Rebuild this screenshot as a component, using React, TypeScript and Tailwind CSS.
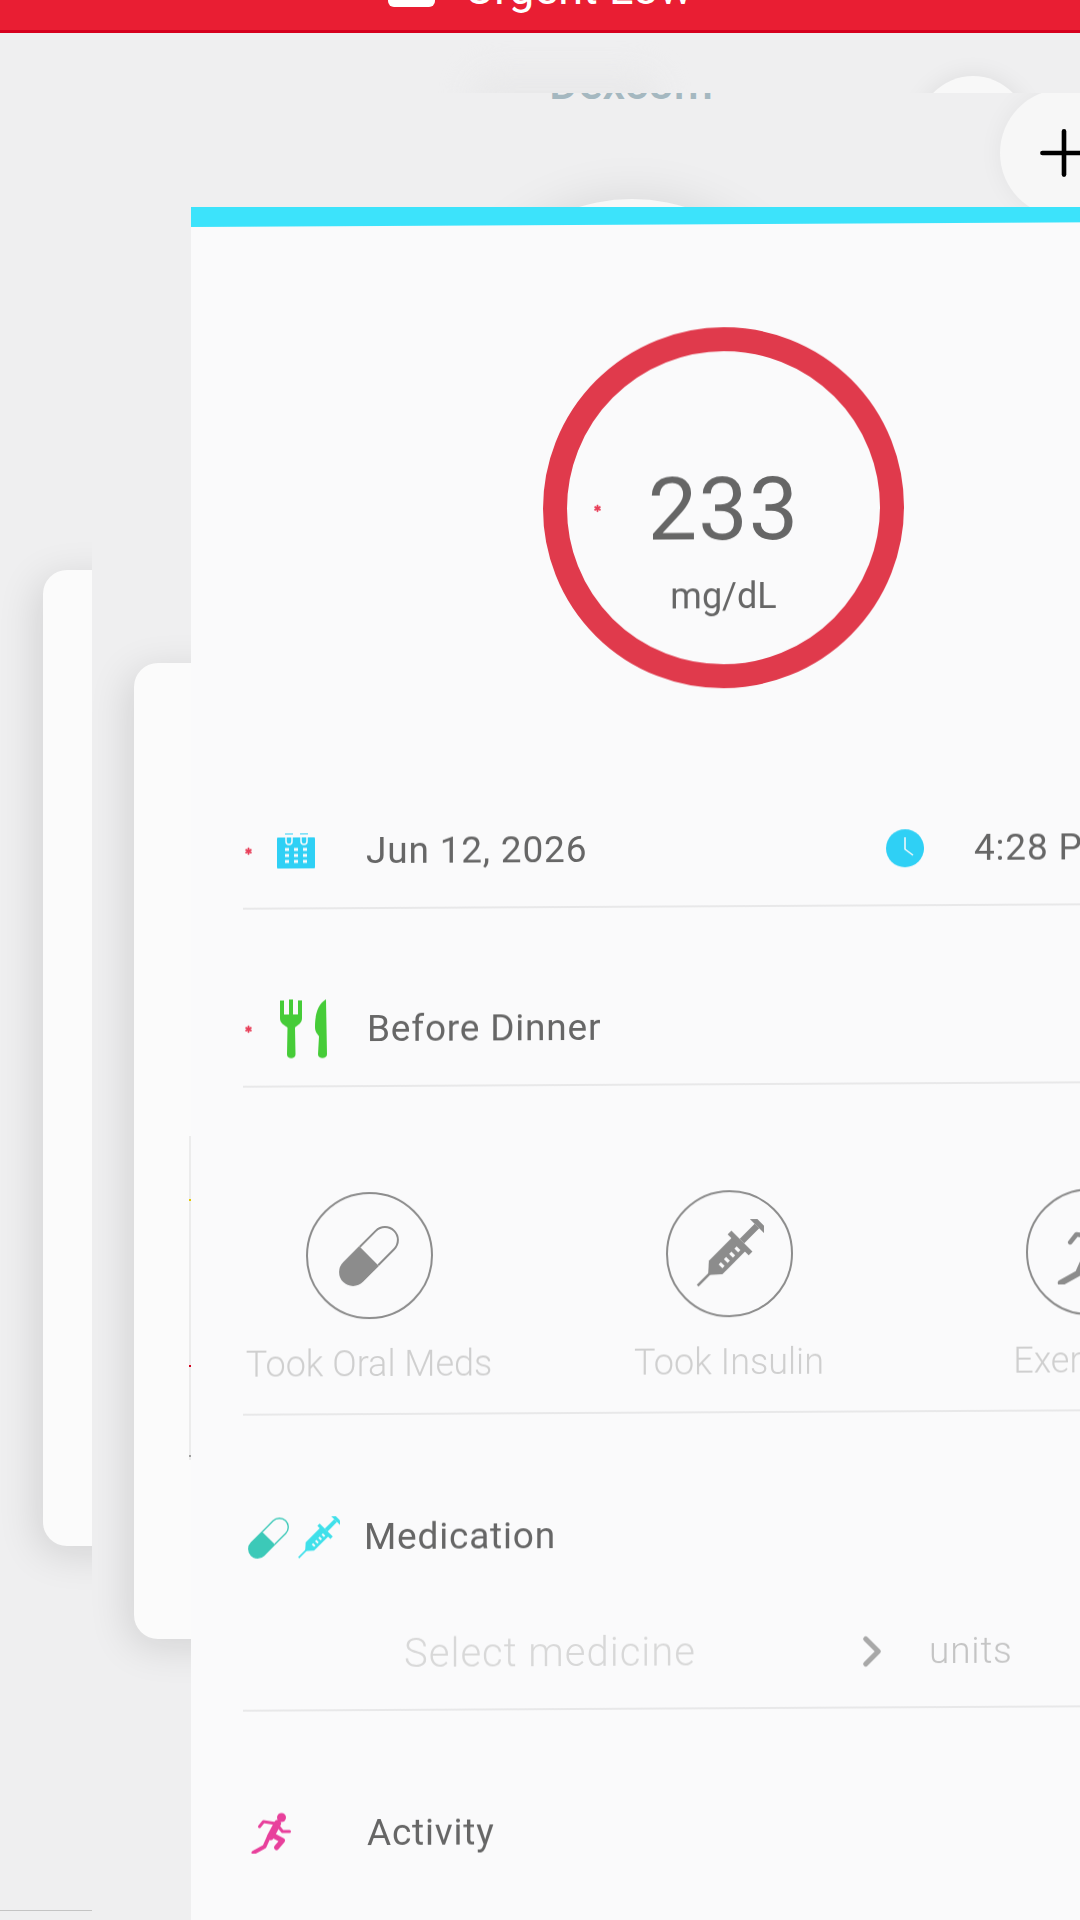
import { Asterisk, ChevronRight, Plus } from "lucide-react";

const Pill = ({ color, className }: { color: string; className: string }) => (
  <svg viewBox="0 0 60 60" className={className}>
    <g transform="rotate(-45 30 30)">
      <path d="M30 16H7.5a14 14 0 0 0 0 28H30z" fill={color} />
      <path d="M30 17H52.5a13 13 0 0 1 0 26H30" fill="none" stroke={color} strokeWidth="2" />
    </g>
  </svg>
);

const Syringe = ({ color, className }: { color: string; className: string }) => (
  <svg viewBox="15 20 65 65" className={className}>
    <g transform="rotate(-45 50 50)">
      <path d="M4 50H22" stroke={color} strokeWidth="2.5" />
      <path d="M18 50L28 41H60V59H28Z" fill={color} />
      <rect x="58" y="36" width="5" height="28" fill={color} />
      <rect x="63" y="47" width="20" height="6" fill={color} />
      <rect x="83" y="40" width="5" height="20" fill={color} />
      {[32, 39, 46, 53].map((x) => (
        <rect key={x} x={x} y="50" width="3" height="5" fill="#fafafb" />
      ))}
    </g>
  </svg>
);

const Runner = ({ color, className }: { color: string; className: string }) => (
  <svg viewBox="0 0 40 41" className={className} fill="none" stroke={color} strokeLinecap="round" strokeLinejoin="round">
    <circle cx="30" cy="5" r="4.5" fill={color} stroke="none" />
    <path d="M26 11L19 24" strokeWidth="7" />
    <path d="M24 11L12 9L8 14" strokeWidth="3" />
    <path d="M27 14L31 19H38" strokeWidth="3" />
    <path d="M20 22L31 28L25 35" strokeWidth="5" />
    <path d="M17 25L13 34L2 40" strokeWidth="4" />
  </svg>
);

const CalendarIcon = () => (
  <svg viewBox="0 0 38 35" className="w-[38px] h-[35px]">
    <rect x="0" y="4" width="38" height="31" rx="1" fill="#2fd0f5" />
    <path d="M9 1v7a3 3 0 0 0 6 0V1M24 1v7a3 3 0 0 0 6 0V1" fill="none" stroke="#fafafb" strokeWidth="1.5" />
    <path d="M8 0h8M23 0h8" stroke="#2fd0f5" strokeWidth="2" />
    {[16, 22, 28].map((cy) =>
      [10, 19, 28].map((cx) => <rect key={`${cx}-${cy}`} x={cx - 2} y={cy - 1.5} width="4" height="3" fill="#fafafb" />)
    )}
  </svg>
);

const ClockIcon = () => (
  <svg viewBox="0 0 38 38" className="w-[38px] h-[38px]">
    <circle cx="19" cy="19" r="19" fill="#2fd0f5" />
    <path d="M19 8v12l8 6" fill="none" stroke="#fafafb" strokeWidth="1.5" />
  </svg>
);

const ForkKnife = () => (
  <svg viewBox="0 0 49 59" className="w-[49px] h-[59px]">
    <path
      d="M0 1H4V15H9V0H13V15H18V1H22V19C22 24 17 26 15 28L15.5 55C15.5 60 7 60 7 55L7.5 28C5 26 0 24 0 19Z"
      fill="#46cc38"
    />
    <path d="M46 0C38 5 35 14 35 28C35 33 38 35 39 37L38 55C38 60 47 60 47 55Z" fill="#46cc38" />
  </svg>
);

const Divider = () => <div className="ml-[52px] h-[2px] bg-[#e8e8e9]" />;

const Toggle = ({ label, children }: { label: string; children: React.ReactNode }) => (
  <div className="flex flex-col items-center">
    <div className="w-[127px] h-[127px] rounded-full border-2 border-[#8c8c8c] flex items-center justify-center overflow-hidden">
      {children}
    </div>
    <span className="mt-[27px] text-[36px] leading-[36px] font-light text-[#cfcfcf] whitespace-nowrap">{label}</span>
  </div>
);

export default function App() {
  return (
    <div className="relative w-[1080px] h-[1920px] overflow-hidden bg-[#efeff0] font-[Roboto,sans-serif]">
      {/* alert bar, mostly scrolled off the top */}
      <div className="relative h-[33px] bg-[#e91e33] border-b-[3px] border-[#d6001e] overflow-hidden">
        <div className="absolute left-[388px] top-[-40px] w-[47px] h-[47px] rounded-[6px] bg-white" />
        <span className="absolute left-[465px] bottom-[21px] text-[45px] leading-[40px] text-white whitespace-nowrap">
          Urgent Low
        </span>
      </div>

      {/* cards further back in the stack */}
      <div className="absolute left-[470px] top-[72px] w-[190px] h-[50px] rounded-full bg-[#e9e9ea] blur-[14px]" />
      <div className="absolute left-[918px] top-[76px] w-[110px] h-[110px] rounded-full bg-[#f8f8f8] shadow-[0_0_24px_rgba(0,0,0,0.08)]" />
      <div className="absolute left-[43px] top-[570px] w-[200px] h-[976px] rounded-[24px] bg-[#fbfbfb] shadow-[-6px_8px_40px_rgba(0,0,0,0.12)]" />
      <div className="absolute left-0 top-[1910px] w-[92px] h-px bg-[#c4c4c4]" />

      <div className="absolute left-[92px] right-0 top-[93px] bottom-0 overflow-hidden bg-[#efeff0]">
        <span className="absolute left-[457px] top-[-29px] text-[45px] leading-[40px] font-medium text-[#a5b8c0] whitespace-nowrap">
          Dexcom
        </span>
        <div className="absolute left-[908px] top-[-4px] w-[128px] h-[128px] rounded-full bg-[#f7f7f7] flex items-center justify-center shadow-[0_0_24px_rgba(0,0,0,0.05)]">
          <Plus size={74} strokeWidth={1.5} className="text-black" />
        </div>
        <div className="absolute left-[360px] top-[106px] w-[360px] h-[360px] rounded-full bg-[#f8f8f8] shadow-[0_0_50px_rgba(0,0,0,0.1)]" />
        <div className="absolute left-[42px] top-[570px] w-[200px] h-[976px] rounded-[24px] bg-[#fbfbfb] shadow-[-6px_8px_40px_rgba(0,0,0,0.12)]" />
        <div className="absolute left-[97px] top-[1043px] w-[2px] h-[324px] bg-[#ececec]" />
        <div className="absolute left-[97px] top-[1106px] w-[2px] h-[2px] bg-[#e3c800]" />
        <div className="absolute left-[97px] top-[1272px] w-[2px] h-[2px] bg-[#d6001e]" />
        <div className="absolute left-[97px] top-[1362px] w-[2px] h-[2px] bg-[#a0a0a0]" />
      </div>

      {/* top card, the photo of it runs very slightly uphill */}
      <div className="absolute left-[191px] right-0 top-[207px] bottom-0 overflow-hidden bg-[#fafafb]">
        <div className="w-[1065px] origin-top-left skew-y-[-0.3deg] blur-[0.3px] text-[#666666] tracking-[0.8px]">
          <div className="h-[20px] bg-[#3ce3fb]" />

          <div className="relative mx-auto mt-[103px] w-[361px] h-[361px] rounded-full border-[24px] border-[#e03a4c] flex flex-col items-center">
            <Asterisk size={11} strokeWidth={4} className="absolute left-[25px] top-[151px] text-[#e8405a]" />
            <span className="mt-[116px] text-[88px] leading-[84px] tracking-[1px]">233</span>
            <span className="mt-[25px] text-[36px] leading-[40px] tracking-normal">mg/dL</span>
          </div>

          <div className="mt-[137px] ml-[52px] pb-[33px] h-[80px] flex items-center">
            <div className="w-[34px]">
              <Asterisk size={11} strokeWidth={4} className="text-[#e8405a]" />
            </div>
            <CalendarIcon />
            <span className="ml-[51px] w-[520px] text-[37px] whitespace-nowrap">Jun 12, 2026</span>
            <ClockIcon />
            <span className="ml-[50px] text-[37px] whitespace-nowrap">4:28 PM</span>
          </div>
          <Divider />

          <div className="mt-[90px] ml-[52px] mb-[27px] h-[59px] flex items-center">
            <div className="w-[37px]">
              <Asterisk size={11} strokeWidth={4} className="text-[#e8405a]" />
            </div>
            <ForkKnife />
            <span className="ml-[38px] text-[37px] whitespace-nowrap">Before Dinner</span>
          </div>
          <Divider />

          <div className="mt-[105px] mb-[31px] -ml-[2px] grid grid-cols-[repeat(3,360px)] tracking-normal">
            <Toggle label="Took Oral Meds">
              <Pill color="#8c8c8c" className="w-[60px] h-[60px]" />
            </Toggle>
            <Toggle label="Took Insulin">
              <Syringe color="#8c8c8c" className="w-[69px] h-[69px]" />
            </Toggle>
            <Toggle label="Exercised">
              <Runner color="#8c8c8c" className="w-[64px] h-[64px]" />
            </Toggle>
          </div>
          <Divider />

          <div className="mt-[100px] ml-[57px] h-[44px] flex items-center">
            <Pill color="#3cc9b8" className="w-[41px] h-[41px]" />
            <Syringe color="#3fe0ea" className="ml-[8px] w-[43px] h-[43px]" />
            <span className="ml-[24px] text-[37px] whitespace-nowrap">Medication</span>
          </div>

          <div className="mt-[77px] ml-[213px] mb-[37px] h-[36px] flex items-center">
            <span className="w-[443px] text-[40px] tracking-[1px] font-light text-[#d8d8d8] whitespace-nowrap">
              Select medicine
            </span>
            <ChevronRight size={50} strokeWidth={2.5} className="text-[#a8a8a8]" />
            <span className="ml-[32px] text-[37px] font-light text-[#c4c4c4]">units</span>
          </div>
          <Divider />

          <div className="mt-[101px] ml-[60px] h-[41px] flex items-center">
            <Runner color="#e8409c" className="w-[41px] h-[41px]" />
            <span className="ml-[75px] text-[37px] whitespace-nowrap">Activity</span>
          </div>
        </div>
      </div>
    </div>
  );
}
